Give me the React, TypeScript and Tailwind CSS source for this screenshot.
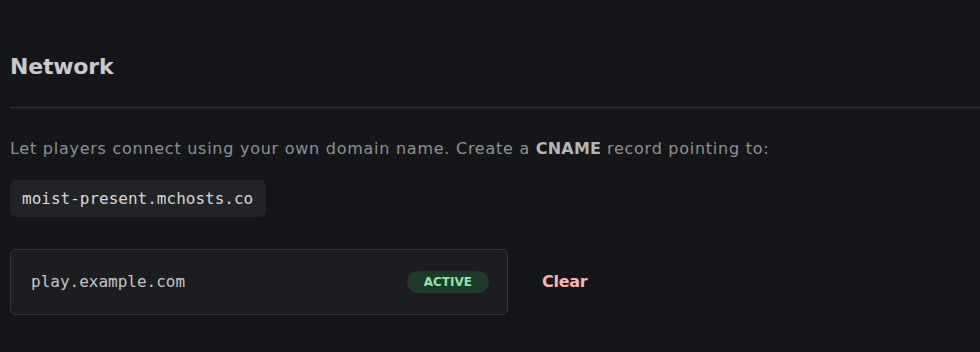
import React from "react";

export default function App() {
  return (
    <div className="min-h-screen w-full bg-[#151619] text-[#c9cacd]" style={{ fontFamily: '"DejaVu Sans", sans-serif' }}>
      <div className="pl-[10px] pt-[52px]">
        {/* Section header */}
        <div className="pb-[25px] border-b border-[#34353b]">
          <h2 className="text-[22px] leading-[30px] font-semibold text-[#c9cacd] tracking-[-0.2px]">Network</h2>
        </div>

        <p className="mt-[29px] text-[16px] leading-[24px] tracking-[0.74px] text-[#8e9096]">
          Let players connect using your own domain name. Create a{" "}
          <span className="font-bold text-[#b4b6ba] tracking-[0.2px]">CNAME</span> record pointing to:
        </p>

        <div className="mt-[19px] inline-flex items-center h-[37px] pl-[12px] pr-[13px] rounded-[6px] bg-[#222327]">
          <code className="text-[16px] text-[#d6d7da]" style={{ fontFamily: '"DejaVu Sans Mono", monospace' }}>
            moist-present.mchosts.co
          </code>
        </div>

        {/* Custom domain row */}
        <div className="mt-[32px] flex items-center">
          <div className="w-[498px] h-[66px] flex items-center justify-between pl-[20px] pr-[18px] rounded-[6px] border border-[#34353a] bg-[#1c1d21]">
            <span className="text-[16px] text-[#c4c6ca]" style={{ fontFamily: '"DejaVu Sans Mono", monospace' }}>
              play.example.com
            </span>
            <span className="h-[22px] px-[17px] flex items-center rounded-full bg-[#1d3a28] text-[12px] font-bold text-[#8ee6a4]">
              ACTIVE
            </span>
          </div>
          <button className="ml-[34px] text-[16px] font-semibold tracking-[-0.3px] text-[#fbb4b4]">Clear</button>
        </div>
      </div>
    </div>
  );
}
